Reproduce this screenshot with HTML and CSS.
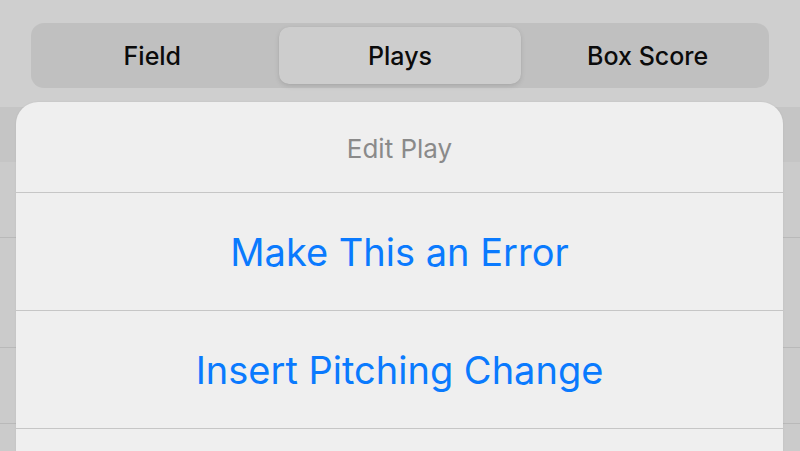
FILE: index.html
```html
<!DOCTYPE html>
<html>
<head>
<meta charset="utf-8">
<link rel="stylesheet" href="styles.css">
</head>
<body>
<div class="screen">
  <header class="topbar">
    <div class="segmented">
      <div class="seg"><span>Field</span></div>
      <div class="seg selected"><span>Plays</span></div>
      <div class="seg"><span>Box Score</span></div>
    </div>
  </header>
  <div class="band"></div>
  <div class="row r1"></div>
  <div class="row r2"></div>
  <div class="row r3"></div>
  <div class="row r4"></div>

  <div class="sheet">
    <div class="sheet-title">Edit Play</div>
    <div class="action">Make This an Error</div>
    <div class="action">Insert Pitching Change</div>
    <div class="action"></div>
  </div>
</div>
</body>
</html>
```

FILE: styles.css
```css
html, body {
  margin: 0;
  padding: 0;
}
body {
  width: 800px;
  height: 451px;
  overflow: hidden;
  background: #cbcbcb;
  font-family: Inter, "Noto Sans", "Liberation Sans", sans-serif;
}
.screen {
  position: relative;
  width: 800px;
  height: 451px;
  overflow: hidden;
}
.topbar {
  height: 107px;
  background: #cfcfcf;
  padding: 23px 31px 0;
  box-sizing: border-box;
}
.segmented {
  display: flex;
  height: 65px;
  background: #c0c0c0;
  border-radius: 13px;
}
.seg {
  flex: 1;
  display: flex;
  align-items: center;
  justify-content: center;
  font-size: 25px;
  font-weight: 500;
  color: #0b0b0b;
}
.seg.selected {
  margin: 4px 5px;
  background: #cdcdcd;
  border-radius: 10px;
  box-shadow: 0 2px 5px rgba(0,0,0,0.12), 0 0 1px rgba(0,0,0,0.08);
}
.band {
  height: 55px;
  background: #c5c5c5;
}
.row {
  border-bottom: 1px solid #b9b9b9;
  background: #cbcbcb;
  box-sizing: border-box;
}
.r1 { height: 76px; }
.r2 { height: 110px; }
.r3 { height: 76px; }
.r4 { height: 76px; }
.sheet {
  position: absolute;
  left: 16px;
  top: 102px;
  width: 767px;
  height: 400px;
  background: #efefef;
  border-radius: 22px 22px 0 0;
  box-shadow: 0 0 2px rgba(0,0,0,0.08);
}
.sheet-title {
  height: 91px;
  display: flex;
  align-items: center;
  justify-content: center;
  padding-top: 2px;
  font-size: 26px;
  color: #8a8a8a;
  border-bottom: 1px solid #c6c6c6;
  box-sizing: border-box;
}
.action {
  height: 118px;
  display: flex;
  align-items: center;
  justify-content: center;
  font-size: 38px;
  color: #0a7afe;
  border-bottom: 1px solid #c6c6c6;
  box-sizing: border-box;
}
```
